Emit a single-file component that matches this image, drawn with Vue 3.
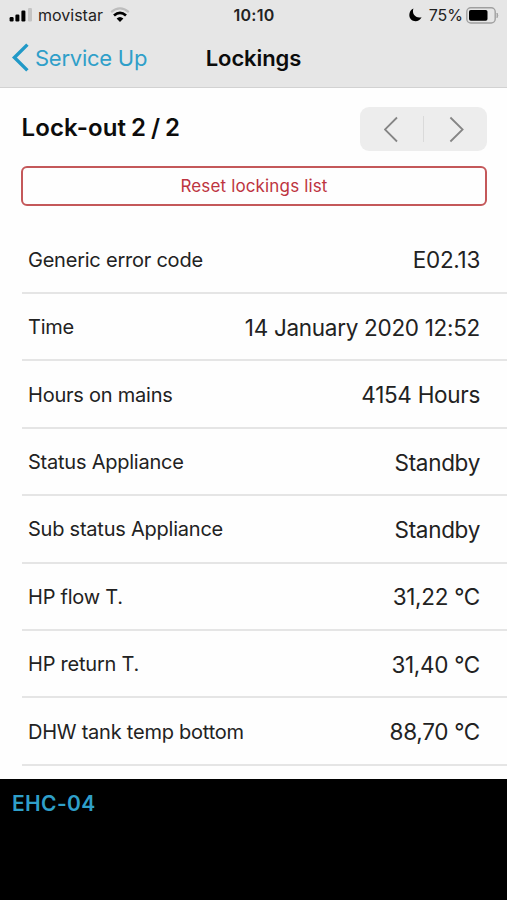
<script setup>
import { ref } from "vue"

const rows = ref([
  { label: "Generic error code", value: "E02.13" },
  { label: "Time", value: "14 January 2020 12:52" },
  { label: "Hours on mains", value: "4154 Hours" },
  { label: "Status Appliance", value: "Standby" },
  { label: "Sub status Appliance", value: "Standby" },
  { label: "HP flow T.", value: "31,22 °C" },
  { label: "HP return T.", value: "31,40 °C" },
  { label: "DHW tank temp bottom", value: "88,70 °C" }
])
</script>

<template>
  <div class="screen">

    <header class="top">
      <div class="status-bar">
        <div class="status-left">
          <svg class="signal" width="24" height="14" viewBox="0 0 24 14">
            <rect x="0.6" y="9" width="4" height="4.5" rx="1.2" />
            <rect x="6.4" y="6.5" width="4" height="7" rx="1.2" />
            <rect x="12.4" y="2.5" width="4" height="11" rx="1.2" />
            <rect x="19" y="0" width="4" height="13.5" rx="1.2" fill="#c4c4c4" />
          </svg>
          <span class="carrier">movistar</span>
          <svg class="wifi" width="20" height="16" viewBox="0 0 20 16" fill="none">
            <path d="M1.2 5.2 Q10 -2.4 18.8 5.2" stroke="#bdbdbd" stroke-width="2.2" />
            <path d="M4 8.6 Q10 3.2 16 8.6" stroke="#000" stroke-width="2.7" />
            <path d="M6.6 11.4 Q10 8.4 13.4 11.4 L10 14.9 Z" fill="#000" />
          </svg>
        </div>
        <span class="clock">10:10</span>
        <div class="status-right">
          <svg width="13" height="14" viewBox="0 0 13 14">
            <path d="M4.4 0.6 C2.6 6.2 6.6 10.6 12.6 9.2 C11.2 12 9 13.3 6.6 13.3 C3 13.3 0.3 10.6 0.3 7.1 C0.3 4.2 1.9 1.7 4.4 0.6 Z" />
          </svg>
          <span class="percent">75%</span>
          <svg width="33" height="17" viewBox="0 0 33 17">
            <rect x="0.8" y="0.8" width="28.4" height="15.2" rx="4" fill="none" stroke="#a0a0a0" stroke-width="1.4" />
            <rect x="3" y="3" width="18.5" height="10.8" rx="1.8" />
            <path d="M31 6 Q32.6 8.4 31 10.8 Z" fill="#a0a0a0" stroke="#a0a0a0" stroke-width="0.8" />
          </svg>
        </div>
      </div>

      <nav class="nav-bar">
        <a class="back">
          <svg width="18" height="29" viewBox="0 0 18 29" fill="none">
            <path d="M16.4 1.6 L3.4 14.5 L16.4 27.4" stroke="#2199c7" stroke-width="3.4" />
          </svg>
          <span class="back-text">Service Up</span>
        </a>
        <h1 class="title">Lockings</h1>
      </nav>
    </header>

    <main class="content">
      <div class="heading">
        <h2>Lock-out 2 / 2</h2>
        <div class="pager">
          <button class="pager-btn">
            <svg width="16" height="27" viewBox="0 0 16 27" fill="none">
              <path d="M13 1.5 L0.9 13.5 L13 25.5" stroke="#858585" stroke-width="1.8" />
            </svg>
          </button>
          <span class="divider"></span>
          <button class="pager-btn">
            <svg width="16" height="27" viewBox="0 0 16 27" fill="none">
              <path d="M2.4 1.5 L14.6 13.5 L2.4 25.5" stroke="#858585" stroke-width="1.8" />
            </svg>
          </button>
        </div>
      </div>

      <button class="reset"><span>Reset lockings list</span></button>

      <ul class="list">
        <li v-for="row in rows" :key="row.label" class="row">
          <span class="label">{{ row.label }}</span>
          <span class="value">{{ row.value }}</span>
        </li>
      </ul>
    </main>

    <footer class="device">
      <span>EHC-04</span>
    </footer>

  </div>
</template>

<style>
body{
  margin: 0;
}
</style>

<style scoped>

.screen{
  display: flex;
  flex-direction: column;
  width: 507px;
  height: 900px;
  overflow: hidden;
  background: #fefefe;
  color: #222;
  font-family: Inter, "Liberation Sans", sans-serif;
}

.top{
  box-sizing: border-box;
  height: 88px;
  background: #e6e6e6;
  border-bottom: 1px solid #d2d2d2;
}

.status-bar{
  display: grid;
  grid-template-columns: 1fr auto 1fr;
  align-items: center;
  height: 30px;
  padding: 0 8px 0 9px;
  font-size: 16px;
}

.status-left,
.status-right{
  display: flex;
  align-items: center;
}

.status-right{
  justify-content: flex-end;
}

.carrier{
  margin: 0 7px 0 5px;
}

.clock{
  font-weight: 600;
  letter-spacing: 0.3px;
}

.percent{
  margin: 0 3px 0 7px;
}

.nav-bar{
  display: grid;
  grid-template-columns: 1fr auto 1fr;
  align-items: center;
  height: 55px;
  padding: 0 11px;
}

.back{
  display: flex;
  align-items: center;
  gap: 6px;
  color: #2f9fc9;
}

.back-text{
  font-size: 22px;
  letter-spacing: -0.25px;
}

.title{
  margin: 0;
  color: #0c0c0c;
  font-size: 22px;
  font-weight: 600;
  letter-spacing: -0.1px;
}

.content{
  height: 691px;
  overflow: hidden;
}

.heading{
  display: flex;
  align-items: center;
  justify-content: space-between;
  padding: 19px 20px 0 21.5px;
}

.heading h2{
  margin: 0 0 4px;
  color: #0c0c0c;
  font-size: 24px;
  font-weight: 600;
  letter-spacing: 0.15px;
  word-spacing: -1.4px;
}

.pager{
  display: flex;
  align-items: center;
  width: 127px;
  height: 44px;
  border-radius: 9px;
  background: #ededed;
}

.pager-btn{
  display: flex;
  flex: 1;
  justify-content: center;
  padding: 0;
  border: none;
  background: none;
}

.divider{
  width: 1px;
  height: 26px;
  background: #dadada;
}

.reset{
  display: block;
  box-sizing: border-box;
  width: 466px;
  height: 40px;
  margin: 15px 0 0 21px;
  padding: 0;
  border: 2px solid #c4585a;
  border-radius: 6px;
  background: none;
  color: #bd3440;
  font-family: inherit;
  font-size: 17px;
  letter-spacing: 0.15px;
}

.list{
  margin: 20.6px 0 0;
  padding: 0 0 0 22px;
  list-style: none;
}

.row{
  display: flex;
  box-sizing: border-box;
  align-items: center;
  justify-content: space-between;
  height: 67.42px;
  padding: 1px 27px 0 6px;
  border-bottom: 2px solid #e5e5e5;
}

.label{
  font-size: 20px;
  letter-spacing: -0.23px;
}

.value{
  font-size: 22.5px;
  letter-spacing: -0.3px;
}

.device{
  flex: 1;
  padding: 12px 12px 0;
  background: #000;
  color: #2f9fc9;
  font-size: 21px;
  font-weight: 600;
  letter-spacing: 0.35px;
}
</style>
